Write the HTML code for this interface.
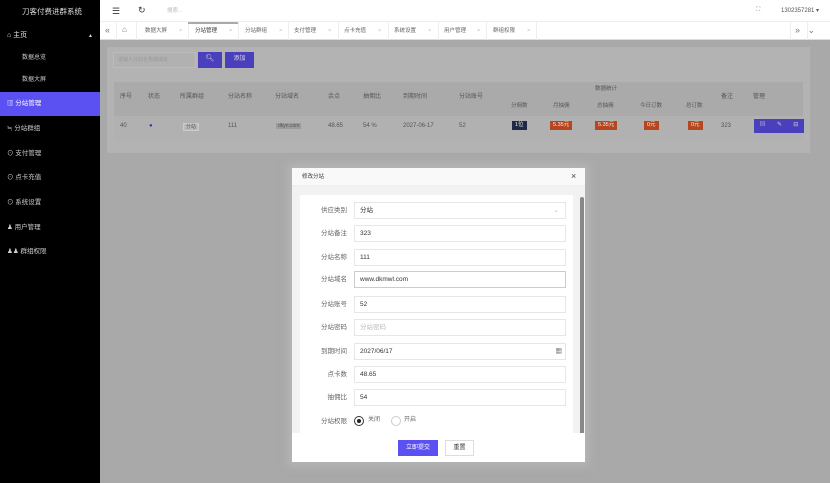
<!DOCTYPE html>
<html><head><meta charset="utf-8"><style>
*{margin:0;padding:0;box-sizing:border-box}
body{width:830px;height:483px;overflow:hidden;font-family:"Liberation Sans","Noto Sans CJK SC",sans-serif;font-size:7px;color:#333;position:relative;background:#fff;line-height:1.2}
.a{position:absolute;white-space:nowrap}
#side{left:0;top:0;width:100px;height:483px;background:#000;color:#ccc}
#main{left:100px;top:40px;width:730px;height:443px;background:#a9a9a9}
.inp{position:absolute;left:354px;width:212px;height:17px;border:1px solid #e6e6e6;background:#fff;font-size:6.5px;padding:0 0 0 5px;line-height:15px;color:#333}
.lbl{position:absolute;width:60px;left:287px;text-align:right;font-size:6.5px;color:#666;line-height:17px}
.tag{position:absolute;height:9px;font-size:5.5px;color:#eee;padding:1px 3px;background:#b5461f;line-height:7px}
.tab{position:absolute;top:28px;font-size:5.5px;color:#666}
.x{position:absolute;top:28px;font-size:5.5px;color:#bbb}
.sep{position:absolute;top:22px;width:1px;height:18px;background:#eee}
</style></head><body>
<div id="side" class="a">
 <div class="a" style="left:22px;top:7px;font-size:7.5px;color:#ddd">刀客付费进群系统</div>
 <div class="a" style="left:7px;top:32px;color:#eee">⌂ 主页</div>
 <div class="a" style="left:88px;top:33px;font-size:5px;color:#ddd">▲</div>
 <div class="a" style="left:22px;top:55px;font-size:6px">数据总览</div>
 <div class="a" style="left:22px;top:77px;font-size:6px">数据大屏</div>
 <div class="a" style="left:0;top:92px;width:100px;height:24px;background:#5b50f2"></div>
 <div class="a" style="left:7px;top:100px;color:#fff;font-size:6.5px">▥ 分站管理</div>
 <div class="a" style="left:7px;top:125px;font-size:6.5px">≒ 分站群组</div>
 <div class="a" style="left:7px;top:150px;font-size:6.5px">⊙ 支付管理</div>
 <div class="a" style="left:7px;top:174px;font-size:6.5px">⊙ 点卡充值</div>
 <div class="a" style="left:7px;top:199px;font-size:6.5px">⊙ 系统设置</div>
 <div class="a" style="left:7px;top:224px;font-size:6.5px">♟ 用户管理</div>
 <div class="a" style="left:7px;top:248px;font-size:6.5px">♟♟ 群组权限</div>
</div>
<div class="a" style="left:100px;top:0;width:730px;height:22px;background:#fff;border-bottom:1px solid #eee"></div>
<div class="a" style="left:112px;top:6px;font-size:9px">☰</div>
<div class="a" style="left:138px;top:5px;font-size:9px">↻</div>
<div class="a" style="left:167px;top:8px;font-size:5.5px;color:#bbb">搜索...</div>
<div class="a" style="left:756px;top:7px;font-size:6px;color:#888">⛶</div>
<div class="a" style="left:781px;top:8px;font-size:6px;color:#555">1302357281 ▾</div>
<div class="a" style="left:100px;top:22px;width:730px;height:18px;background:#fff;border-bottom:1px solid #ddd"></div>
<div class="a" style="left:105px;top:25px;font-size:9px;color:#777">«</div>
<div class="a" style="left:122px;top:25px;font-size:8px;color:#777">⌂</div>
<div class="sep" style="left:116px"></div><div class="sep" style="left:136px"></div><div class="sep" style="left:188px"></div><div class="sep" style="left:238px"></div><div class="sep" style="left:288px"></div><div class="sep" style="left:338px"></div><div class="sep" style="left:388px"></div><div class="sep" style="left:438px"></div><div class="sep" style="left:486px"></div><div class="sep" style="left:536px"></div><div class="sep" style="left:790px"></div><div class="sep" style="left:807px"></div>
<div class="a" style="left:188px;top:22px;width:50px;height:2px;background:#aaa"></div>
<div class="tab" style="left:145px">数据大屏</div><div class="x" style="left:179px">×</div>
<div class="tab" style="left:195px;color:#333">分站管理</div><div class="x" style="left:229px">×</div>
<div class="tab" style="left:245px">分站群组</div><div class="x" style="left:279px">×</div>
<div class="tab" style="left:294px">支付管理</div><div class="x" style="left:328px">×</div>
<div class="tab" style="left:344px">点卡充值</div><div class="x" style="left:378px">×</div>
<div class="tab" style="left:394px">系统设置</div><div class="x" style="left:428px">×</div>
<div class="tab" style="left:444px">用户管理</div><div class="x" style="left:477px">×</div>
<div class="tab" style="left:493px">群组权限</div><div class="x" style="left:527px">×</div>
<div class="a" style="left:795px;top:25px;font-size:9px;color:#777">»&nbsp;&nbsp;&nbsp;⌄</div>
<div id="main" class="a"></div>
<div class="a" style="left:107px;top:47px;width:703px;height:106px;background:#b3b3b3"></div>
<div class="a" style="left:113px;top:52px;width:83px;height:16px;border:1px solid #bbb;background:#b1b1b1;font-size:5px;color:#999;padding:4px 4px">请输入分站名称或域名</div>
<div class="a" style="left:198px;top:52px;width:24px;height:16px;background:#4a40bd;color:#ddd;text-align:center;padding-top:3px">🔍︎</div>
<div class="a" style="left:225px;top:52px;width:29px;height:16px;background:#4a40bd;color:#ddd;text-align:center;padding-top:4px;font-size:6px">添加</div>
<div class="a" style="left:114px;top:82px;width:689px;height:34px;background:#aaa"></div>
<div class="a" style="left:114px;top:116px;width:689px;height:24px;background:#b1b1b1"></div>
<div class="a" style="left:0;top:94px;font-size:6px;color:#555">
 <span class="a" style="left:120px">序号</span><span class="a" style="left:148px">状态</span><span class="a" style="left:180px">所属群组</span><span class="a" style="left:228px">分站名称</span><span class="a" style="left:275px">分站域名</span><span class="a" style="left:328px">余点</span><span class="a" style="left:363px">抽佣比</span><span class="a" style="left:403px">到期时间</span><span class="a" style="left:459px">分站账号</span><span class="a" style="left:721px">备注</span><span class="a" style="left:753px">管理</span>
</div>
<div class="a" style="left:595px;top:86px;font-size:5.5px;color:#555">数据统计</div>
<div class="a" style="left:0;top:103px;font-size:5.5px;color:#555">
 <span class="a" style="left:511px">分佣数</span><span class="a" style="left:553px">月抽佣</span><span class="a" style="left:597px">总抽佣</span><span class="a" style="left:640px">今日订数</span><span class="a" style="left:686px">总订数</span>
</div>
<div class="a" style="left:0;top:123px;font-size:6px;color:#555">
 <span class="a" style="left:120px">40</span><span class="a" style="left:149px;color:#3b35b0">●</span><span class="a" style="left:183px;background:#bbb;border:1px solid #ccc;padding:0 2px;font-size:5px">分站</span><span class="a" style="left:228px">111</span><span class="a" style="left:276px;background:#9c9c9c;padding:0 2px;font-size:5px">dkyn.com</span><span class="a" style="left:328px">48.65</span><span class="a" style="left:363px">54 %</span><span class="a" style="left:403px">2027-06-17</span><span class="a" style="left:459px">52</span><span class="a" style="left:721px">323</span>
</div>
<div class="tag" style="left:512px;top:121px;background:#1f2a44">1位</div>
<div class="tag" style="left:550px;top:121px">5.35元</div>
<div class="tag" style="left:595px;top:121px">5.35元</div>
<div class="tag" style="left:644px;top:121px">0元</div>
<div class="tag" style="left:688px;top:121px">0元</div>
<div class="a" style="left:754px;top:119px;width:50px;height:14px;background:#4a40bd;color:#ccc;font-size:6px;padding-top:3px;display:flex;justify-content:space-around">▤<span>✎</span><span>⊟</span></div>
<!-- modal -->
<div class="a" style="left:292px;top:168px;width:293px;height:294px;background:#f2f2f2;box-shadow:0 0 8px 4px rgba(190,190,190,.6)"></div>
<div class="a" style="left:292px;top:168px;width:293px;height:18px;background:#f8f9f8;border-bottom:1px solid #eee"></div>
<div class="a" style="left:302px;top:174px;font-size:5.5px">修改分站</div>
<div class="a" style="left:571px;top:171px;font-size:9px;color:#444">×</div>
<div class="a" style="left:300px;top:195px;width:273px;height:238px;background:#fff"></div>
<div class="a" style="left:580px;top:197px;width:4px;height:238px;background:#888;border-radius:2px"></div>
<div class="lbl" style="top:202px">供应类别</div><div class="inp" style="top:202px">分站<span style="position:absolute;right:6px;color:#bbb">⌄</span></div>
<div class="lbl" style="top:225px">分站备注</div><div class="inp" style="top:225px">323</div>
<div class="lbl" style="top:249px">分站名称</div><div class="inp" style="top:249px">111</div>
<div class="lbl" style="top:271px">分站域名</div><div class="inp" style="top:271px;border-color:#ccc">www.dkmwl.com</div>
<div class="lbl" style="top:296px">分站账号</div><div class="inp" style="top:296px">52</div>
<div class="lbl" style="top:319px">分站密码</div><div class="inp" style="top:319px;color:#bbb">分站密码</div>
<div class="lbl" style="top:343px">到期时间</div><div class="inp" style="top:343px">2027/06/17<span style="position:absolute;right:3px">▦</span></div>
<div class="lbl" style="top:366px">点卡数</div><div class="inp" style="top:366px">48.65</div>
<div class="lbl" style="top:389px">抽佣比</div><div class="inp" style="top:389px">54</div>
<div class="lbl" style="top:413px">分站权限</div>
<div class="a" style="left:354px;top:416px;width:10px;height:10px;border:1px solid #333;border-radius:50%"></div>
<div class="a" style="left:357px;top:419px;width:4px;height:4px;background:#222;border-radius:50%"></div>
<div class="a" style="left:368px;top:417px;font-size:6px;color:#666">关闭</div>
<div class="a" style="left:391px;top:416px;width:10px;height:10px;border:1px solid #ccc;border-radius:50%"></div>
<div class="a" style="left:404px;top:417px;font-size:6px;color:#666">开启</div>
<div class="a" style="left:292px;top:433px;width:293px;height:29px;background:#fff"></div>
<div class="a" style="left:398px;top:440px;width:40px;height:16px;background:#5b50f2;color:#fff;font-size:6px;text-align:center;line-height:16px">立即提交</div>
<div class="a" style="left:445px;top:440px;width:29px;height:16px;border:1px solid #ddd;background:#fff;font-size:6px;text-align:center;line-height:14px">重置</div>
</body></html>
